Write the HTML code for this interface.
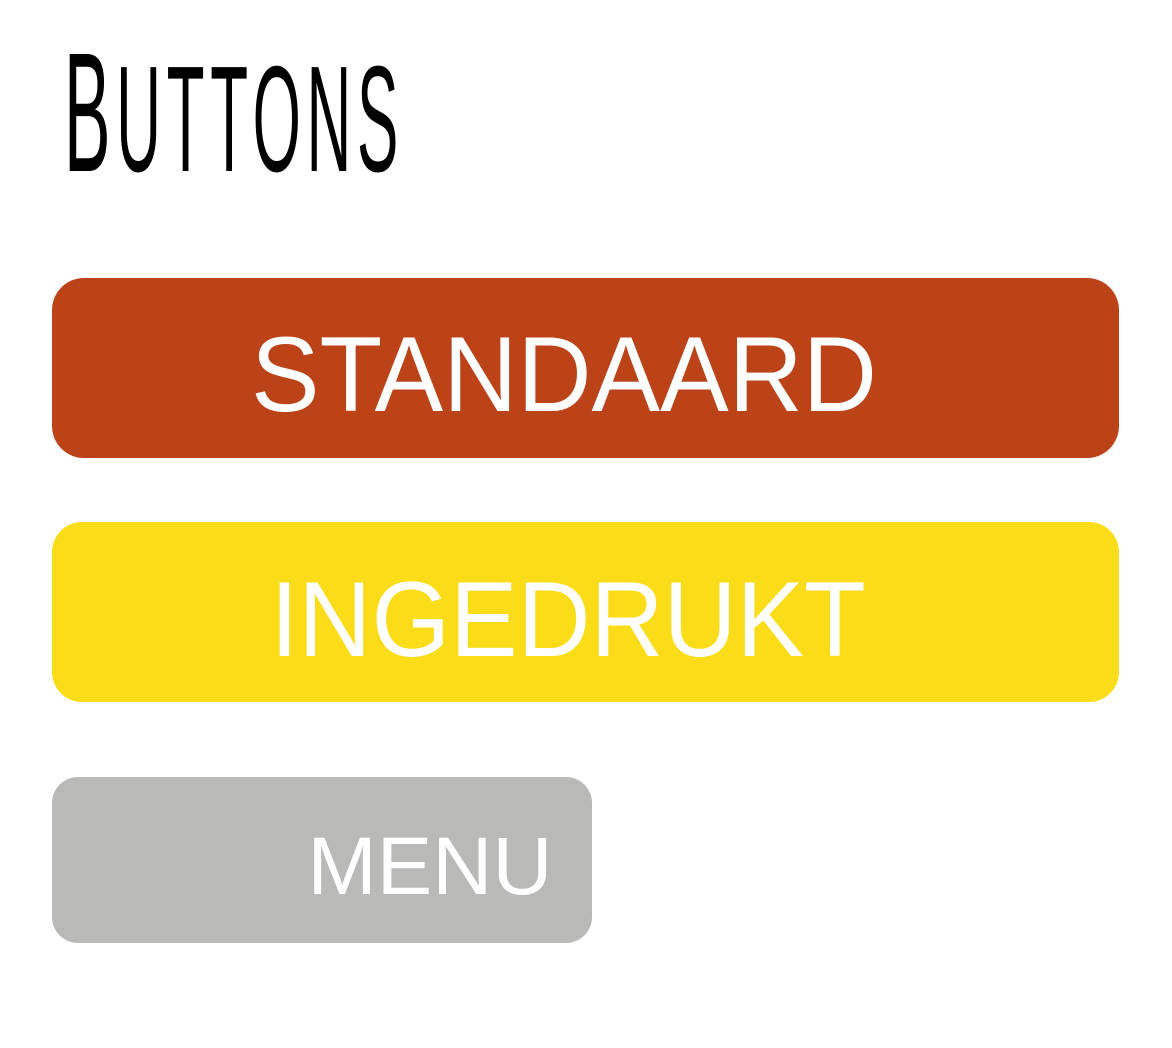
<!DOCTYPE html>
<html><head><style>
body{margin:0;width:1172px;height:1048px;background:#fff;position:relative;overflow:hidden;font-family:"Liberation Sans",sans-serif}
.t{position:absolute;left:64px;top:28px;white-space:nowrap;transform-origin:0 0;transform:scaleX(0.41);font-size:170px;line-height:170px;color:#000;letter-spacing:14px}
.t .s{font-size:151px}
.b{position:absolute;color:#fff;display:flex;align-items:center;justify-content:center;box-sizing:border-box}
.b span{display:inline-block}
</style></head><body>
<div class="t">B<span class="s">UTTONS</span></div>
<div class="b" style="left:52px;top:278px;width:1067px;height:180px;background:#bc4218;border-radius:32px;font-size:107px;padding-right:44px;padding-top:12px"><span style="transform:scaleX(0.96)">STANDAARD</span></div>
<div class="b" style="left:52px;top:522px;width:1067px;height:180px;background:#fadc18;border-radius:30px;font-size:107px;padding-right:34px;padding-top:14px"><span style="transform:scaleX(0.945)">INGEDRUKT</span></div>
<div class="b" style="left:52px;top:777px;width:540px;height:166px;background:#b9b9b7;border-radius:26px;font-size:82px;justify-content:flex-end;padding-right:40px;padding-top:14px"><span style="transform-origin:100% 50%;transform:scaleX(1.015)">MENU</span></div>
</body></html>
